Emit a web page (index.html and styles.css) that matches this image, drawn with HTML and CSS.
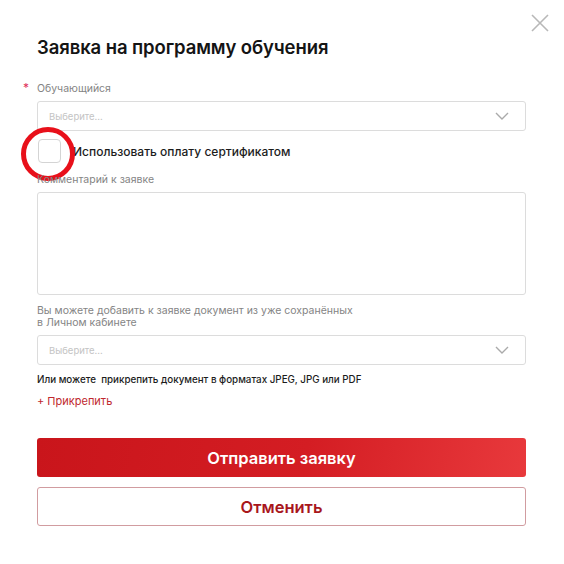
FILE: index.html
```html
<!DOCTYPE html>
<html lang="ru">
<head>
    <meta charset="UTF-8">
    <title>Заявка на программу обучения</title>
    <link rel="stylesheet" href="styles.css">
</head>
<body>
    <div class="modal">
        <button class="close" title="Закрыть">
            <svg width="18" height="18" viewBox="0 0 18 18"><path d="M1 1L17 17M17 1L1 17" stroke="#b8b8b8" stroke-width="1.6" fill="none"/></svg>
        </button>
        <h1 class="title">Заявка на программу обучения</h1>

        <div class="field">
            <label class="label required">Обучающийся</label>
            <div class="select">
                <span>Выберите...</span>
                <svg width="14" height="8" viewBox="0 0 14 8"><path d="M1 1L7 7L13 1" stroke="#aaa" stroke-width="1.4" fill="none"/></svg>
            </div>
        </div>

        <label class="check">
            <span class="box"></span>
            <span>Использовать оплату сертификатом</span>
            <span class="mark"></span>
        </label>

        <div class="field">
            <label class="label">Комментарий к заявке</label>
            <div class="textarea"></div>
        </div>

        <div class="field">
            <label class="label">Вы можете добавить к заявке документ из уже сохранённых<br>в Личном кабинете</label>
            <div class="select">
                <span>Выберите...</span>
                <svg width="14" height="8" viewBox="0 0 14 8"><path d="M1 1L7 7L13 1" stroke="#aaa" stroke-width="1.4" fill="none"/></svg>
            </div>
        </div>

        <p class="hint">Или можете&nbsp; прикрепить документ в форматах JPEG, JPG или PDF</p>
        <a href="#" class="attach">+ Прикрепить</a>

        <div class="actions">
            <button class="btn btn-primary">Отправить заявку</button>
            <button class="btn btn-outline">Отменить</button>
        </div>
    </div>
</body>
</html>
```

FILE: styles.css
```css
* {
    margin: 0;
    padding: 0;
    box-sizing: border-box;
    font-family: 'Inter', 'Noto Sans', sans-serif;
}

body {
    background: #fff;
    color: #1c1c1c;
}

.modal {
    position: relative;
    width: 564px;
    padding: 36px 38px 0 37px;
}

.close {
    position: absolute;
    top: 14px;
    right: 15px;
    background: none;
    border: none;
    cursor: pointer;
}

.title {
    font-size: 18.5px;
    font-weight: 600;
    color: #141414;
    margin-bottom: 25px;
    letter-spacing: -0.1px;
}

.field {
    display: flex;
    flex-direction: column;
}

.label {
    position: relative;
    font-size: 10.5px;
    color: #848484;
    line-height: 12px;
    margin-bottom: 6px;
}

.label.required::before {
    content: '*';
    position: absolute;
    left: -14px;
    top: -1px;
    color: #e0305a;
    font-size: 12px;
}

.select {
    height: 30px;
    border: 1px solid #dcdcdc;
    border-radius: 3px;
    display: flex;
    align-items: center;
    justify-content: space-between;
    padding: 0 16px 0 11px;
    font-size: 9.5px;
    color: #c4c4c4;
}

.check {
    position: relative;
    display: flex;
    align-items: center;
    gap: 12px;
    margin: 8px 0 11px 1px;
    font-size: 12px;
    font-weight: 500;
    color: #1c1c1c;
}

.box {
    width: 23px;
    height: 24px;
    border: 1px solid #d4d4d4;
    border-radius: 4px;
}

.mark {
    position: absolute;
    left: -17px;
    top: -12px;
    width: 54px;
    height: 54px;
    border: 5px solid #e8101a;
    border-radius: 50%;
}

.textarea {
    height: 103px;
    border: 1px solid #dcdcdc;
    border-radius: 3px;
    margin-bottom: 10px;
}

.hint {
    font-size: 9.8px;
    font-weight: 500;
    color: #1c1c1c;
    margin-top: 9px;
}

.attach {
    display: inline-block;
    margin-top: 9px;
    font-size: 11px;
    color: #c0282e;
    text-decoration: none;
}

.actions {
    display: flex;
    flex-direction: column;
    gap: 10px;
    margin-top: 29px;
}

.btn {
    height: 39px;
    border-radius: 3px;
    font-size: 16.5px;
    font-weight: 600;
    cursor: pointer;
}

.btn-primary {
    background: linear-gradient(100deg, #c9151b 0%, #d41d23 55%, #e8393c 100%);
    color: #fff;
    border: none;
}

.btn-outline {
    background: #fff;
    color: #a8161c;
    border: 1px solid #d19ca0;
}
```
